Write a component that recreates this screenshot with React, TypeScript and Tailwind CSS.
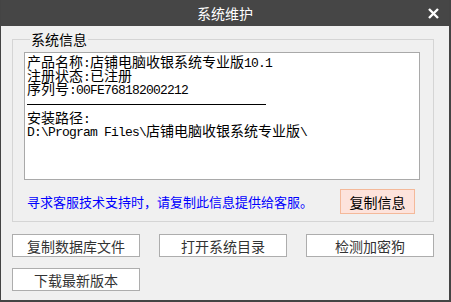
const cjk = "font-['Microsoft_YaHei','Noto_Sans_CJK_SC',sans-serif]";

function Mono({ children }: { children: React.ReactNode }) {
  return (
    <span className="font-['Liberation_Mono',monospace] text-[13px] tracking-[-0.8px] leading-[13.5px]">
      {children}
    </span>
  );
}

function Line({ children }: { children: React.ReactNode }) {
  return <div className="h-[13.5px] leading-[13.5px] whitespace-nowrap">{children}</div>;
}

function ActionButton({ label }: { label: string }) {
  return (
    <button className="w-[128px] h-[23px] bg-white border border-[#adadad] text-[14px] leading-none text-[#333]">
      {label}
    </button>
  );
}

export default function App() {
  return (
    <div className={`w-[451px] h-[302px] bg-[#f0f0f0] border-l border-r-2 border-b-2 border-[#444] flex flex-col ${cjk}`}>
      {/* title bar */}
      <div className="h-[26px] shrink-0 bg-[#464646] flex items-center justify-center relative text-white text-[14px]">
        <span>系统维护</span>
        <svg className="absolute right-[10px] top-[8px] w-[11px] h-[11px]" viewBox="0 0 11 11">
          <path d="M1 1 L10 10 M10 1 L1 10" stroke="white" strokeWidth="2.4" />
        </svg>
      </div>

      <fieldset className="ml-[11px] mt-[6px] w-[422px] h-[190px] border border-[#d5d5d5] pl-[11px] pr-[13px] flex flex-col">
        <legend className="text-[14px] leading-[14px] px-[1px] ml-[6px] text-black">系统信息</legend>

        <div className="mt-[6px] w-[396px] h-[128px] shrink-0 bg-white border border-[#a9a9a9] pl-[2px] pt-[2px] text-[14px] text-black">
          <Line>产品名称<Mono>:</Mono>店铺电脑收银系统专业版<Mono>10.1</Mono></Line>
          <Line>注册状态<Mono>:</Mono>已注册</Line>
          <Line>序列号<Mono>:00FE768182002212</Mono></Line>
          <div className="w-[239px] h-px bg-black mt-[8px] mb-[6px]" />
          <Line>安装路径<Mono>:</Mono></Line>
          <Line><Mono>D:\Program Files\</Mono>店铺电脑收银系统专业版<Mono>\</Mono></Line>
        </div>

        <div className="mt-[9px] flex items-center justify-between pr-[5px]">
          <span className="text-[13px] text-[#0000ff] ml-[3px]">寻求客服技术支持时，请复制此信息提供给客服。</span>
          <button className="w-[75px] h-[25px] bg-[#fde3dc] border border-[#f4b99a] text-[14px] leading-none text-black">
            复制信息
          </button>
        </div>
      </fieldset>

      <div className="mt-[12px] ml-[11px] grid grid-cols-[128px_128px_128px] gap-x-[19px] gap-y-[11px]">
        <ActionButton label="复制数据库文件" />
        <ActionButton label="打开系统目录" />
        <ActionButton label="检测加密狗" />
        <ActionButton label="下载最新版本" />
      </div>
    </div>
  );
}
